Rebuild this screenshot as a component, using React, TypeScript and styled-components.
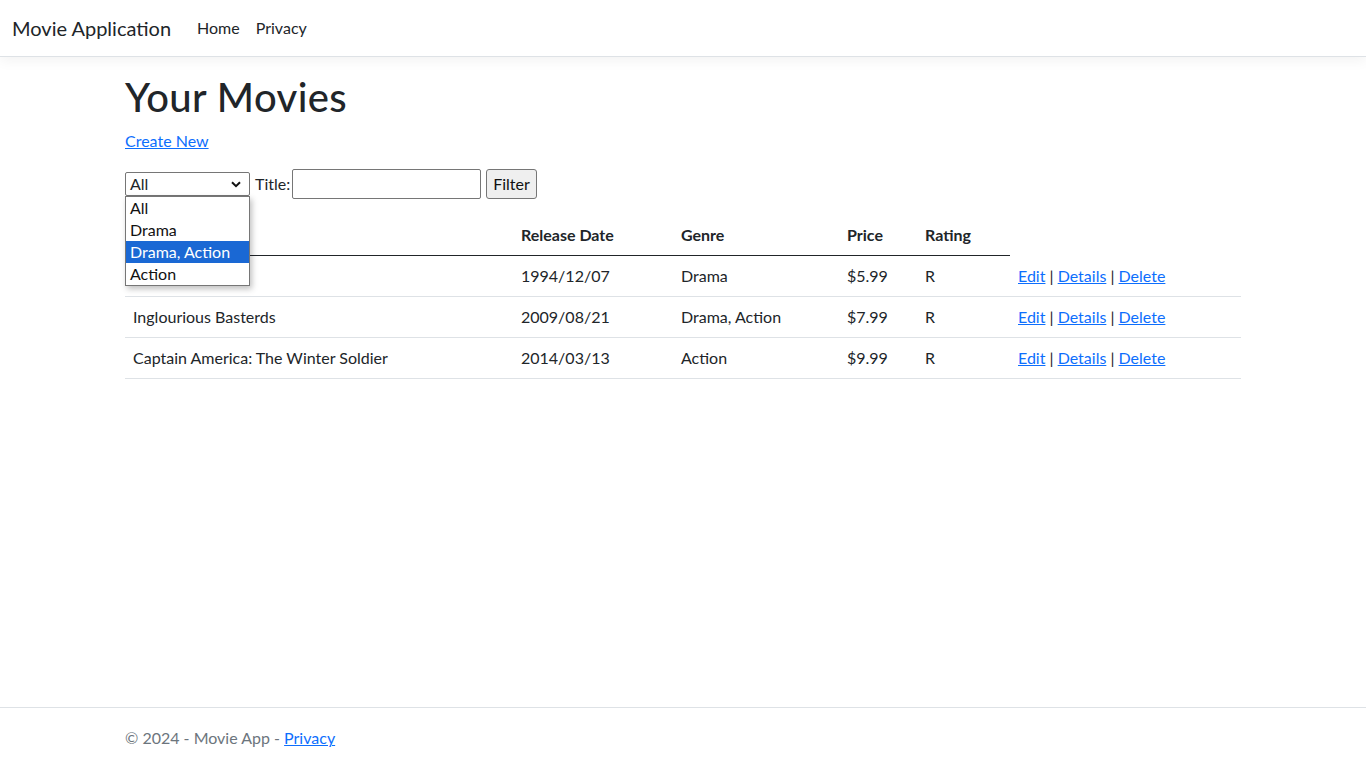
import React from "react";
import styled, { createGlobalStyle } from "styled-components";

const GlobalStyle = createGlobalStyle`
	html, body {
		margin: 0;
		padding: 0;
	}
	body {
		font-family: Lato, "Noto Sans", "DejaVu Sans", sans-serif;
		font-size: 16px;
		line-height: 1.5;
		color: #212529;
		background: #fff;
	}
	* {
		box-sizing: border-box;
	}
`;

// first title sits under the open dropdown, so it's not shown
const movies = [
	{ title: "", date: "1994/12/07", genre: "Drama", price: "$5.99", rating: "R" },
	{ title: "Inglourious Basterds", date: "2009/08/21", genre: "Drama, Action", price: "$7.99", rating: "R" },
	{ title: "Captain America: The Winter Soldier", date: "2014/03/13", genre: "Action", price: "$9.99", rating: "R" },
];

const genres = ["All", "Drama", "Drama, Action", "Action"];

function App() {
	return (
		<Page>
			<GlobalStyle />
			<Navbar>
				<Brand href="#">Movie Application</Brand>
				<NavLink href="#">Home</NavLink>
				<NavLink href="#">Privacy</NavLink>
			</Navbar>
			<Main>
				<Title>Your Movies</Title>
				<Para>
					<Link href="#">Create New</Link>
				</Para>
				<FilterRow>
					<SelectWrap>
						<SelectBox>
							<span>All</span>
							<svg width="10" height="7" viewBox="0 0 10 7">
								<path d="M1 1.2 L5 5.2 L9 1.2" fill="none" stroke="#111" strokeWidth="2" />
							</svg>
						</SelectBox>
						<OptionList>
							{genres.map((g) => (
								<Option key={g} $selected={g === "Drama, Action"}>
									{g}
								</Option>
							))}
						</OptionList>
					</SelectWrap>
					<Label>Title:</Label>
					<TextInput type="text" />
					<FilterButton type="button">Filter</FilterButton>
				</FilterRow>
				<Table>
					<colgroup>
						<col style={{ width: 388 }} />
						<col style={{ width: 160 }} />
						<col style={{ width: 166 }} />
						<col style={{ width: 78 }} />
						<col style={{ width: 93 }} />
						<col />
					</colgroup>
					<thead>
						<tr>
							<Th></Th>
							<Th>Release Date</Th>
							<Th>Genre</Th>
							<Th>Price</Th>
							<Th>Rating</Th>
						</tr>
					</thead>
					<tbody>
						{movies.map((m) => (
							<tr key={m.date}>
								<Td>{m.title}</Td>
								<Td>{m.date}</Td>
								<Td>{m.genre}</Td>
								<Td>{m.price}</Td>
								<Td>{m.rating}</Td>
								<Td>
									<Link href="#">Edit</Link> | <Link href="#">Details</Link> |{" "}
									<Link href="#">Delete</Link>
								</Td>
							</tr>
						))}
					</tbody>
				</Table>
			</Main>
			<Footer>
				<FooterInner>
					&copy; 2024 - Movie App - <Link href="#">Privacy</Link>
				</FooterInner>
			</Footer>
		</Page>
	);
}

const Page = styled.div`
	min-height: 100vh;
	display: flex;
	flex-direction: column;
`;

const Navbar = styled.nav`
	display: flex;
	align-items: center;
	height: 57px;
	padding: 8px 12px;
	border-bottom: 1px solid #dee2e6;
	box-shadow: 0 4px 12px rgba(0, 0, 0, 0.05);
	margin-bottom: 16px;
	background: #fff;
`;

const Brand = styled.a`
	font-size: 20px;
	line-height: 30px;
	padding: 5px 0;
	margin-right: 18px;
	color: #212529;
	text-decoration: none;
`;

const NavLink = styled.a`
	padding: 8px;
	color: #212529;
	text-decoration: none;
`;

const Main = styled.main`
	flex: 1;
	width: 1116px;
	margin: 0 auto;
`;

const Title = styled.h1`
	margin: 0 0 8px;
	font-size: 40px;
	font-weight: 500;
	line-height: 1.2;
	letter-spacing: 0.4px;
`;

const Para = styled.p`
	margin: 0 0 16px;
`;

const Link = styled.a`
	color: #0d6efd;
	text-decoration: underline;
`;

const FilterRow = styled.div`
	display: flex;
	align-items: center;
	height: 30px;
	margin-bottom: 16px;
`;

const SelectWrap = styled.div`
	position: relative;
	width: 125px;
`;

const SelectBox = styled.div`
	display: flex;
	align-items: center;
	justify-content: space-between;
	height: 24px;
	padding: 0 8px 0 4px;
	border: 1px solid #767676;
	border-radius: 2px;
	background: #fff;
	line-height: 22px;
`;

const OptionList = styled.div`
	position: absolute;
	top: 100%;
	left: 0;
	width: 125px;
	border: 1px solid #767676;
	background: #fff;
	box-shadow: 2px 3px 6px rgba(0, 0, 0, 0.25);
	z-index: 10;
`;

const Option = styled.div<{ $selected?: boolean }>`
	height: 22px;
	line-height: 22px;
	padding: 0 4px;
	white-space: nowrap;
	background: ${(p) => (p.$selected ? "#1a68d4" : "#fff")};
	color: ${(p) => (p.$selected ? "#fff" : "#111")};
`;

const Label = styled.span`
	margin: 0 2px 0 5px;
`;

const TextInput = styled.input`
	width: 189px;
	height: 30px;
	padding: 1px 2px;
	border: 1px solid #767676;
	border-radius: 2px;
	font: inherit;
`;

const FilterButton = styled.button`
	height: 30px;
	margin-left: 5px;
	padding: 1px 6px;
	border: 1px solid #767676;
	border-radius: 3px;
	background: #efefef;
	color: #111;
	font: inherit;
`;

const Table = styled.table`
	width: 100%;
	table-layout: fixed;
	border-collapse: collapse;
	margin-bottom: 16px;
`;

const Th = styled.th`
	text-align: left;
	vertical-align: bottom;
	padding: 8px;
	font-weight: 700;
	border-bottom: 1px solid #212529;
`;

const Td = styled.td`
	height: 41px;
	padding: 8px;
	border-bottom: 1px solid #dee2e6;
	white-space: nowrap;
`;

const Footer = styled.footer`
	border-top: 1px solid #dee2e6;
	line-height: 60px;
	color: #6c757d;
	white-space: nowrap;
`;

const FooterInner = styled.div`
	width: 1116px;
	margin: 0 auto;
`;

export default App;
